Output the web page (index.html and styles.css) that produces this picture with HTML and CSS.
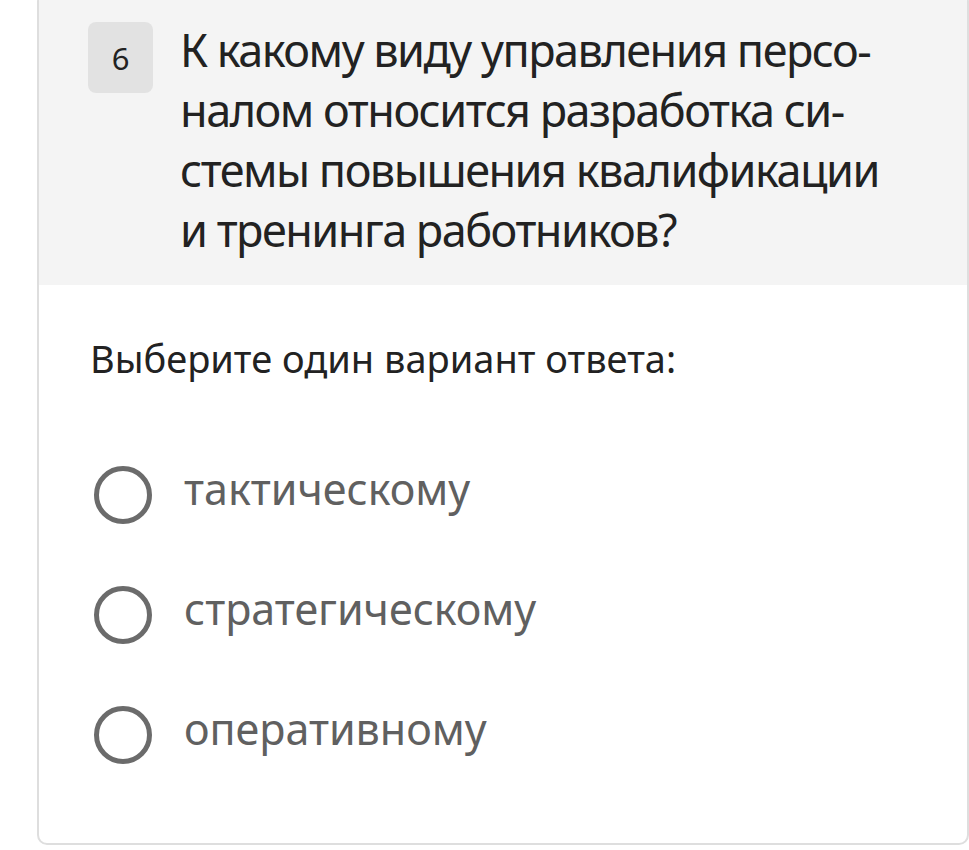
FILE: index.html
```html
<!DOCTYPE html>
<html lang="ru">
<head>
    <meta charset="UTF-8">
    <meta name="viewport" content="width=device-width, initial-scale=1.0">
    <title>Вопрос 6</title>
    <link rel="stylesheet" href="styles.css">
</head>
<body>
    <div class="card">
        <div class="card-head">
            <div class="badge">6</div>
            <div class="question">
                К какому виду управления персо-<br>
                налом относится разработка си-<br>
                стемы повышения квалификации<br>
                и тренинга работников?
            </div>
        </div>

        <div class="card-body">
            <div class="hint">Выберите один вариант ответа:</div>

            <div class="options">
                <label class="option">
                    <span class="radio"></span>
                    <span class="option-text">тактическому</span>
                </label>
                <label class="option">
                    <span class="radio"></span>
                    <span class="option-text">стратегическому</span>
                </label>
                <label class="option">
                    <span class="radio"></span>
                    <span class="option-text">оперативному</span>
                </label>
            </div>
        </div>
    </div>
</body>
</html>
```

FILE: styles.css
```css
* {
    margin: 0;
    padding: 0;
    box-sizing: border-box;
}
body {
    font-family: "Noto Sans", "Open Sans", sans-serif;
    background-color: #fff;
    color: #222;
    overflow: hidden;
}
.card {
    margin: -8px 0 0 37px;
    border: 2px solid #dedede;
    border-radius: 10px;
    overflow: hidden;
    background: #fff;
}
.card-head {
    background: #f4f4f4;
    display: flex;
    align-items: flex-start;
    gap: 27px;
    padding: 26px 10px 25px 49px;
}
.badge {
    flex: none;
    width: 65px;
    height: 71px;
    margin-top: 2px;
    border-radius: 8px;
    background: #e2e2e2;
    display: flex;
    align-items: center;
    justify-content: center;
    font-size: 31px;
    color: #222;
}
.question {
    font-size: 45px;
    line-height: 60px;
    letter-spacing: -1.5px;
    color: #222;
    white-space: nowrap;
}
.card-body {
    padding: 48px 20px 79px 51px;
}
.hint {
    font-size: 38px;
    line-height: 50px;
    color: #222;
}
.options {
    margin-top: 83px;
    display: flex;
    flex-direction: column;
    gap: 62px;
}
.option {
    display: flex;
    align-items: center;
    gap: 32px;
    height: 58px;
    margin-left: 4px;
}
.radio {
    flex: none;
    width: 58px;
    height: 58px;
    border: 5px solid #6b6b6b;
    border-radius: 50%;
}
.option-text {
    font-size: 43px;
    line-height: 58px;
    color: #606060;
    margin-bottom: 12px;
}
```
